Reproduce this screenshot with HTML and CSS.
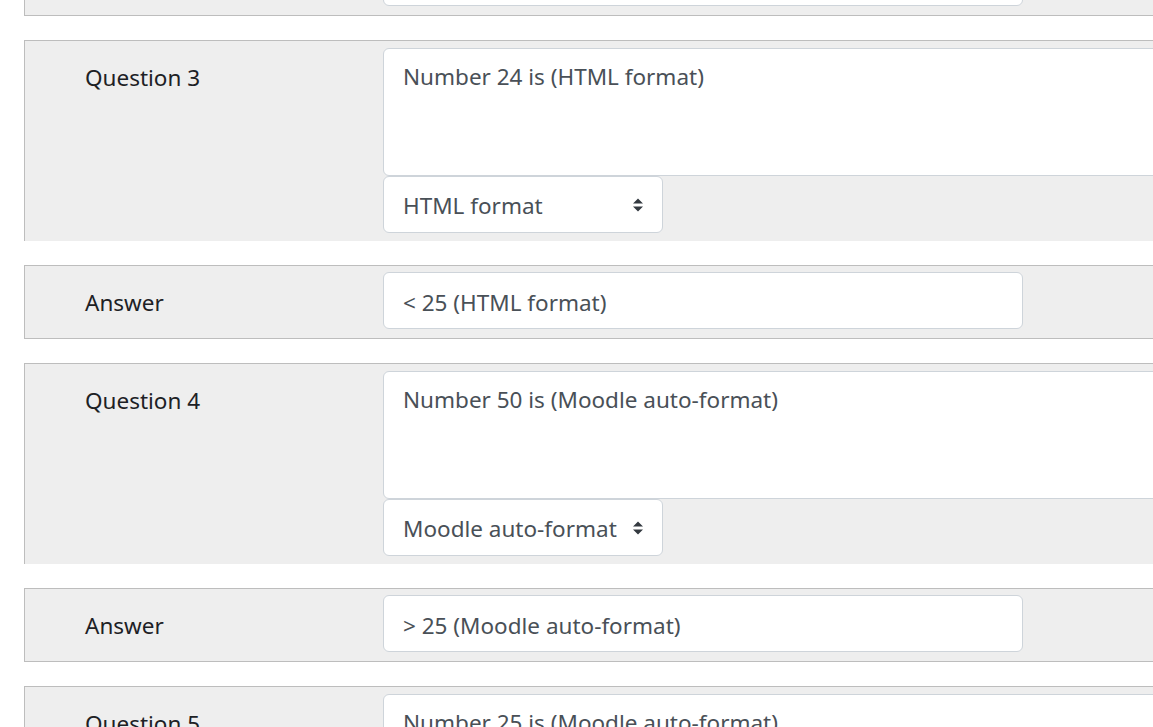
FILE: index.html
```html
<!DOCTYPE html>
<html>
<head>
<meta charset="utf-8">
<link rel="stylesheet" href="styles.css">
</head>
<body>
<div class="page">
  <div class="row answer first">
    <div class="label">Answer</div>
    <div class="field"><div class="input">&gt; 0</div></div>
  </div>

  <div class="row question">
    <div class="label">Question 3</div>
    <div class="field">
      <div class="textarea">Number 24 is (HTML format)</div>
      <div class="select"><span>HTML format</span><svg class="arrows" width="12" height="16" viewBox="0 0 12 16"><path d="M6 1.5 L11 6.5 L1 6.5 Z M6 14.5 L11 9.5 L1 9.5 Z" fill="#343a40"/></svg></div>
    </div>
  </div>

  <div class="row answer">
    <div class="label">Answer</div>
    <div class="field"><div class="input">&lt; 25 (HTML format)</div></div>
  </div>

  <div class="row question">
    <div class="label">Question 4</div>
    <div class="field">
      <div class="textarea">Number 50 is (Moodle auto-format)</div>
      <div class="select"><span>Moodle auto-format</span><svg class="arrows" width="12" height="16" viewBox="0 0 12 16"><path d="M6 1.5 L11 6.5 L1 6.5 Z M6 14.5 L11 9.5 L1 9.5 Z" fill="#343a40"/></svg></div>
    </div>
  </div>

  <div class="row answer">
    <div class="label">Answer</div>
    <div class="field"><div class="input">&gt; 25 (Moodle auto-format)</div></div>
  </div>

  <div class="row question">
    <div class="label">Question 5</div>
    <div class="field">
      <div class="textarea">Number 25 is (Moodle auto-format)</div>
      <div class="select"><span>Moodle auto-format</span><svg class="arrows" width="12" height="16" viewBox="0 0 12 16"><path d="M6 1.5 L11 6.5 L1 6.5 Z M6 14.5 L11 9.5 L1 9.5 Z" fill="#343a40"/></svg></div>
    </div>
  </div>
</div>
</body>
</html>
```

FILE: styles.css
```css
html, body {
  margin: 0;
  padding: 0;
  background: #ffffff;
  overflow: hidden;
}
body {
  font-family: "Noto Sans", "Open Sans", sans-serif;
  font-size: 22.5px;
  color: #1d2125;
}
.page {
  padding-left: 24px;
  display: flex;
  flex-direction: column;
  gap: 24px;
  width: 1300px;
}
.row {
  display: flex;
  background: #eeeeee;
  border-top: 1px solid #bdbdbd;
  border-left: 1px solid #bdbdbd;
}
.row.answer {
  border-bottom: 1px solid #bdbdbd;
  padding: 6px 0 9px 0;
}
.row.question {
  padding: 7px 0 8px 0;
}
.row.first {
  margin-top: -58px;
}
.label {
  width: 298px;
  padding-left: 60px;
  padding-top: 14px;
  line-height: 34px;
  flex: none;
}
.row.question .label {
  padding-top: 13px;
}
.field {
  display: flex;
  flex-direction: column;
}
.input, .textarea, .select {
  box-sizing: border-box;
  background: #ffffff;
  border: 1px solid #ced4da;
  border-radius: 6px;
  color: #495057;
  line-height: 34px;
}
.input {
  width: 640px;
  height: 57px;
  padding: 13px 19px 0 19px;
}
.textarea {
  width: 900px;
  height: 128px;
  padding: 11px 19px;
}
.select {
  width: 280px;
  height: 57px;
  padding: 3px 19px 0 19px;
  display: flex;
  align-items: center;
  justify-content: space-between;
}
.arrows {
  display: block;
  margin-right: -1px;
  margin-top: -3px;
}
```
